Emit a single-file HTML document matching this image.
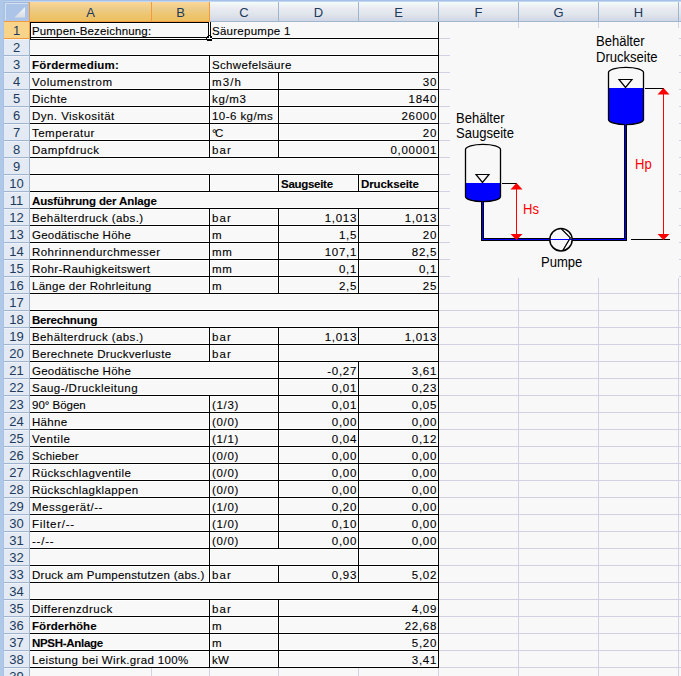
<!DOCTYPE html>
<html><head><meta charset="utf-8"><style>
html,body{margin:0;padding:0}
body{width:681px;height:676px;position:relative;overflow:hidden;background:#f8f8f8;font-family:"Liberation Sans",sans-serif}
div{position:absolute}
.t,.tb{font-size:11.5px;line-height:16px;color:#000;-webkit-text-stroke:0.1px #000;white-space:nowrap;height:16px}
.tb{font-weight:bold}
.num{letter-spacing:0.7px}
.ch{top:3px;height:19px;line-height:19px;text-align:center;font-size:13px;color:#203a5c}
.rh{left:4px;width:25px;height:16px;line-height:17px;text-align:center;font-size:13px;color:#203a5c}
.dg{font-size:13px;color:#000;white-space:nowrap;line-height:15px}
</style></head><body>
<div style="left:518px;top:278px;width:1px;height:398px;background:#d2d0e3;"></div>
<div style="left:518px;top:22px;width:1px;height:6px;background:#d2d0e3;"></div>
<div style="left:598px;top:278px;width:1px;height:398px;background:#d2d0e3;"></div>
<div style="left:598px;top:22px;width:1px;height:6px;background:#d2d0e3;"></div>
<div style="left:678px;top:278px;width:1px;height:398px;background:#d2d0e3;"></div>
<div style="left:678px;top:22px;width:1px;height:6px;background:#d2d0e3;"></div>
<div style="left:151px;top:668px;width:1px;height:8px;background:#d2d0e3;"></div>
<div style="left:209px;top:668px;width:1px;height:8px;background:#d2d0e3;"></div>
<div style="left:278px;top:668px;width:1px;height:8px;background:#d2d0e3;"></div>
<div style="left:358px;top:668px;width:1px;height:8px;background:#d2d0e3;"></div>
<div style="left:438px;top:668px;width:1px;height:8px;background:#d2d0e3;"></div>
<div style="left:439px;top:38px;width:11px;height:1px;background:#d2d0e3;"></div>
<div style="left:679px;top:38px;width:2px;height:1px;background:#d2d0e3;"></div>
<div style="left:439px;top:55px;width:11px;height:1px;background:#d2d0e3;"></div>
<div style="left:679px;top:55px;width:2px;height:1px;background:#d2d0e3;"></div>
<div style="left:439px;top:72px;width:11px;height:1px;background:#d2d0e3;"></div>
<div style="left:679px;top:72px;width:2px;height:1px;background:#d2d0e3;"></div>
<div style="left:439px;top:89px;width:11px;height:1px;background:#d2d0e3;"></div>
<div style="left:679px;top:89px;width:2px;height:1px;background:#d2d0e3;"></div>
<div style="left:439px;top:106px;width:11px;height:1px;background:#d2d0e3;"></div>
<div style="left:679px;top:106px;width:2px;height:1px;background:#d2d0e3;"></div>
<div style="left:439px;top:123px;width:11px;height:1px;background:#d2d0e3;"></div>
<div style="left:679px;top:123px;width:2px;height:1px;background:#d2d0e3;"></div>
<div style="left:439px;top:140px;width:11px;height:1px;background:#d2d0e3;"></div>
<div style="left:679px;top:140px;width:2px;height:1px;background:#d2d0e3;"></div>
<div style="left:439px;top:157px;width:11px;height:1px;background:#d2d0e3;"></div>
<div style="left:679px;top:157px;width:2px;height:1px;background:#d2d0e3;"></div>
<div style="left:439px;top:174px;width:11px;height:1px;background:#d2d0e3;"></div>
<div style="left:679px;top:174px;width:2px;height:1px;background:#d2d0e3;"></div>
<div style="left:439px;top:191px;width:11px;height:1px;background:#d2d0e3;"></div>
<div style="left:679px;top:191px;width:2px;height:1px;background:#d2d0e3;"></div>
<div style="left:439px;top:208px;width:11px;height:1px;background:#d2d0e3;"></div>
<div style="left:679px;top:208px;width:2px;height:1px;background:#d2d0e3;"></div>
<div style="left:439px;top:225px;width:11px;height:1px;background:#d2d0e3;"></div>
<div style="left:679px;top:225px;width:2px;height:1px;background:#d2d0e3;"></div>
<div style="left:439px;top:242px;width:11px;height:1px;background:#d2d0e3;"></div>
<div style="left:679px;top:242px;width:2px;height:1px;background:#d2d0e3;"></div>
<div style="left:439px;top:259px;width:11px;height:1px;background:#d2d0e3;"></div>
<div style="left:679px;top:259px;width:2px;height:1px;background:#d2d0e3;"></div>
<div style="left:439px;top:276px;width:11px;height:1px;background:#d2d0e3;"></div>
<div style="left:679px;top:276px;width:2px;height:1px;background:#d2d0e3;"></div>
<div style="left:439px;top:293px;width:242px;height:1px;background:#d2d0e3;"></div>
<div style="left:439px;top:310px;width:242px;height:1px;background:#d2d0e3;"></div>
<div style="left:439px;top:327px;width:242px;height:1px;background:#d2d0e3;"></div>
<div style="left:439px;top:344px;width:242px;height:1px;background:#d2d0e3;"></div>
<div style="left:439px;top:361px;width:242px;height:1px;background:#d2d0e3;"></div>
<div style="left:439px;top:378px;width:242px;height:1px;background:#d2d0e3;"></div>
<div style="left:439px;top:395px;width:242px;height:1px;background:#d2d0e3;"></div>
<div style="left:439px;top:412px;width:242px;height:1px;background:#d2d0e3;"></div>
<div style="left:439px;top:429px;width:242px;height:1px;background:#d2d0e3;"></div>
<div style="left:439px;top:446px;width:242px;height:1px;background:#d2d0e3;"></div>
<div style="left:439px;top:463px;width:242px;height:1px;background:#d2d0e3;"></div>
<div style="left:439px;top:480px;width:242px;height:1px;background:#d2d0e3;"></div>
<div style="left:439px;top:497px;width:242px;height:1px;background:#d2d0e3;"></div>
<div style="left:439px;top:514px;width:242px;height:1px;background:#d2d0e3;"></div>
<div style="left:439px;top:531px;width:242px;height:1px;background:#d2d0e3;"></div>
<div style="left:439px;top:548px;width:242px;height:1px;background:#d2d0e3;"></div>
<div style="left:439px;top:565px;width:242px;height:1px;background:#d2d0e3;"></div>
<div style="left:439px;top:582px;width:242px;height:1px;background:#d2d0e3;"></div>
<div style="left:439px;top:599px;width:242px;height:1px;background:#d2d0e3;"></div>
<div style="left:439px;top:616px;width:242px;height:1px;background:#d2d0e3;"></div>
<div style="left:439px;top:633px;width:242px;height:1px;background:#d2d0e3;"></div>
<div style="left:439px;top:650px;width:242px;height:1px;background:#d2d0e3;"></div>
<div style="left:439px;top:667px;width:242px;height:1px;background:#d2d0e3;"></div>
<div style="left:439px;top:684px;width:242px;height:1px;background:#d2d0e3;"></div>
<div style="left:30px;top:684px;width:409px;height:1px;background:#d2d0e3;"></div>
<div style="left:30px;top:37px;width:408px;height:1px;background:#ffffff;"></div>
<div style="left:30px;top:39px;width:408px;height:1px;background:#ffffff;"></div>
<div style="left:30px;top:54px;width:408px;height:1px;background:#ffffff;"></div>
<div style="left:30px;top:56px;width:408px;height:1px;background:#ffffff;"></div>
<div style="left:30px;top:71px;width:408px;height:1px;background:#ffffff;"></div>
<div style="left:30px;top:73px;width:408px;height:1px;background:#ffffff;"></div>
<div style="left:30px;top:88px;width:408px;height:1px;background:#ffffff;"></div>
<div style="left:30px;top:90px;width:408px;height:1px;background:#ffffff;"></div>
<div style="left:30px;top:105px;width:408px;height:1px;background:#ffffff;"></div>
<div style="left:30px;top:107px;width:408px;height:1px;background:#ffffff;"></div>
<div style="left:30px;top:122px;width:408px;height:1px;background:#ffffff;"></div>
<div style="left:30px;top:124px;width:408px;height:1px;background:#ffffff;"></div>
<div style="left:30px;top:139px;width:408px;height:1px;background:#ffffff;"></div>
<div style="left:30px;top:141px;width:408px;height:1px;background:#ffffff;"></div>
<div style="left:30px;top:156px;width:408px;height:1px;background:#ffffff;"></div>
<div style="left:30px;top:158px;width:408px;height:1px;background:#ffffff;"></div>
<div style="left:30px;top:173px;width:408px;height:1px;background:#ffffff;"></div>
<div style="left:30px;top:175px;width:408px;height:1px;background:#ffffff;"></div>
<div style="left:30px;top:190px;width:408px;height:1px;background:#ffffff;"></div>
<div style="left:30px;top:192px;width:408px;height:1px;background:#ffffff;"></div>
<div style="left:30px;top:207px;width:408px;height:1px;background:#ffffff;"></div>
<div style="left:30px;top:209px;width:408px;height:1px;background:#ffffff;"></div>
<div style="left:30px;top:224px;width:408px;height:1px;background:#ffffff;"></div>
<div style="left:30px;top:226px;width:408px;height:1px;background:#ffffff;"></div>
<div style="left:30px;top:241px;width:408px;height:1px;background:#ffffff;"></div>
<div style="left:30px;top:243px;width:408px;height:1px;background:#ffffff;"></div>
<div style="left:30px;top:258px;width:408px;height:1px;background:#ffffff;"></div>
<div style="left:30px;top:260px;width:408px;height:1px;background:#ffffff;"></div>
<div style="left:30px;top:275px;width:408px;height:1px;background:#ffffff;"></div>
<div style="left:30px;top:277px;width:408px;height:1px;background:#ffffff;"></div>
<div style="left:30px;top:292px;width:408px;height:1px;background:#ffffff;"></div>
<div style="left:30px;top:294px;width:408px;height:1px;background:#ffffff;"></div>
<div style="left:30px;top:309px;width:408px;height:1px;background:#ffffff;"></div>
<div style="left:30px;top:311px;width:408px;height:1px;background:#ffffff;"></div>
<div style="left:30px;top:326px;width:408px;height:1px;background:#ffffff;"></div>
<div style="left:30px;top:328px;width:408px;height:1px;background:#ffffff;"></div>
<div style="left:30px;top:343px;width:408px;height:1px;background:#ffffff;"></div>
<div style="left:30px;top:345px;width:408px;height:1px;background:#ffffff;"></div>
<div style="left:30px;top:360px;width:408px;height:1px;background:#ffffff;"></div>
<div style="left:30px;top:362px;width:408px;height:1px;background:#ffffff;"></div>
<div style="left:30px;top:377px;width:408px;height:1px;background:#ffffff;"></div>
<div style="left:30px;top:379px;width:408px;height:1px;background:#ffffff;"></div>
<div style="left:30px;top:394px;width:408px;height:1px;background:#ffffff;"></div>
<div style="left:30px;top:396px;width:408px;height:1px;background:#ffffff;"></div>
<div style="left:30px;top:411px;width:408px;height:1px;background:#ffffff;"></div>
<div style="left:30px;top:413px;width:408px;height:1px;background:#ffffff;"></div>
<div style="left:30px;top:428px;width:408px;height:1px;background:#ffffff;"></div>
<div style="left:30px;top:430px;width:408px;height:1px;background:#ffffff;"></div>
<div style="left:30px;top:445px;width:408px;height:1px;background:#ffffff;"></div>
<div style="left:30px;top:447px;width:408px;height:1px;background:#ffffff;"></div>
<div style="left:30px;top:462px;width:408px;height:1px;background:#ffffff;"></div>
<div style="left:30px;top:464px;width:408px;height:1px;background:#ffffff;"></div>
<div style="left:30px;top:479px;width:408px;height:1px;background:#ffffff;"></div>
<div style="left:30px;top:481px;width:408px;height:1px;background:#ffffff;"></div>
<div style="left:30px;top:496px;width:408px;height:1px;background:#ffffff;"></div>
<div style="left:30px;top:498px;width:408px;height:1px;background:#ffffff;"></div>
<div style="left:30px;top:513px;width:408px;height:1px;background:#ffffff;"></div>
<div style="left:30px;top:515px;width:408px;height:1px;background:#ffffff;"></div>
<div style="left:30px;top:530px;width:408px;height:1px;background:#ffffff;"></div>
<div style="left:30px;top:532px;width:408px;height:1px;background:#ffffff;"></div>
<div style="left:30px;top:547px;width:408px;height:1px;background:#ffffff;"></div>
<div style="left:30px;top:549px;width:408px;height:1px;background:#ffffff;"></div>
<div style="left:30px;top:564px;width:408px;height:1px;background:#ffffff;"></div>
<div style="left:30px;top:566px;width:408px;height:1px;background:#ffffff;"></div>
<div style="left:30px;top:581px;width:408px;height:1px;background:#ffffff;"></div>
<div style="left:30px;top:583px;width:408px;height:1px;background:#ffffff;"></div>
<div style="left:30px;top:598px;width:408px;height:1px;background:#ffffff;"></div>
<div style="left:30px;top:600px;width:408px;height:1px;background:#ffffff;"></div>
<div style="left:30px;top:615px;width:408px;height:1px;background:#ffffff;"></div>
<div style="left:30px;top:617px;width:408px;height:1px;background:#ffffff;"></div>
<div style="left:30px;top:632px;width:408px;height:1px;background:#ffffff;"></div>
<div style="left:30px;top:634px;width:408px;height:1px;background:#ffffff;"></div>
<div style="left:30px;top:649px;width:408px;height:1px;background:#ffffff;"></div>
<div style="left:30px;top:651px;width:408px;height:1px;background:#ffffff;"></div>
<div style="left:30px;top:666px;width:408px;height:1px;background:#ffffff;"></div>
<div style="left:208px;top:22px;width:1px;height:16px;background:#ffffff;"></div>
<div style="left:210px;top:22px;width:1px;height:16px;background:#ffffff;"></div>
<div style="left:437px;top:22px;width:1px;height:16px;background:#ffffff;"></div>
<div style="left:437px;top:39px;width:1px;height:16px;background:#ffffff;"></div>
<div style="left:208px;top:56px;width:1px;height:16px;background:#ffffff;"></div>
<div style="left:210px;top:56px;width:1px;height:16px;background:#ffffff;"></div>
<div style="left:437px;top:56px;width:1px;height:16px;background:#ffffff;"></div>
<div style="left:208px;top:73px;width:1px;height:16px;background:#ffffff;"></div>
<div style="left:210px;top:73px;width:1px;height:16px;background:#ffffff;"></div>
<div style="left:277px;top:73px;width:1px;height:16px;background:#ffffff;"></div>
<div style="left:279px;top:73px;width:1px;height:16px;background:#ffffff;"></div>
<div style="left:437px;top:73px;width:1px;height:16px;background:#ffffff;"></div>
<div style="left:208px;top:90px;width:1px;height:16px;background:#ffffff;"></div>
<div style="left:210px;top:90px;width:1px;height:16px;background:#ffffff;"></div>
<div style="left:277px;top:90px;width:1px;height:16px;background:#ffffff;"></div>
<div style="left:279px;top:90px;width:1px;height:16px;background:#ffffff;"></div>
<div style="left:437px;top:90px;width:1px;height:16px;background:#ffffff;"></div>
<div style="left:208px;top:107px;width:1px;height:16px;background:#ffffff;"></div>
<div style="left:210px;top:107px;width:1px;height:16px;background:#ffffff;"></div>
<div style="left:277px;top:107px;width:1px;height:16px;background:#ffffff;"></div>
<div style="left:279px;top:107px;width:1px;height:16px;background:#ffffff;"></div>
<div style="left:437px;top:107px;width:1px;height:16px;background:#ffffff;"></div>
<div style="left:208px;top:124px;width:1px;height:16px;background:#ffffff;"></div>
<div style="left:210px;top:124px;width:1px;height:16px;background:#ffffff;"></div>
<div style="left:277px;top:124px;width:1px;height:16px;background:#ffffff;"></div>
<div style="left:279px;top:124px;width:1px;height:16px;background:#ffffff;"></div>
<div style="left:437px;top:124px;width:1px;height:16px;background:#ffffff;"></div>
<div style="left:208px;top:141px;width:1px;height:16px;background:#ffffff;"></div>
<div style="left:210px;top:141px;width:1px;height:16px;background:#ffffff;"></div>
<div style="left:277px;top:141px;width:1px;height:16px;background:#ffffff;"></div>
<div style="left:279px;top:141px;width:1px;height:16px;background:#ffffff;"></div>
<div style="left:437px;top:141px;width:1px;height:16px;background:#ffffff;"></div>
<div style="left:437px;top:158px;width:1px;height:16px;background:#ffffff;"></div>
<div style="left:208px;top:175px;width:1px;height:16px;background:#ffffff;"></div>
<div style="left:210px;top:175px;width:1px;height:16px;background:#ffffff;"></div>
<div style="left:277px;top:175px;width:1px;height:16px;background:#ffffff;"></div>
<div style="left:279px;top:175px;width:1px;height:16px;background:#ffffff;"></div>
<div style="left:357px;top:175px;width:1px;height:16px;background:#ffffff;"></div>
<div style="left:359px;top:175px;width:1px;height:16px;background:#ffffff;"></div>
<div style="left:437px;top:175px;width:1px;height:16px;background:#ffffff;"></div>
<div style="left:437px;top:192px;width:1px;height:16px;background:#ffffff;"></div>
<div style="left:208px;top:209px;width:1px;height:16px;background:#ffffff;"></div>
<div style="left:210px;top:209px;width:1px;height:16px;background:#ffffff;"></div>
<div style="left:277px;top:209px;width:1px;height:16px;background:#ffffff;"></div>
<div style="left:279px;top:209px;width:1px;height:16px;background:#ffffff;"></div>
<div style="left:357px;top:209px;width:1px;height:16px;background:#ffffff;"></div>
<div style="left:359px;top:209px;width:1px;height:16px;background:#ffffff;"></div>
<div style="left:437px;top:209px;width:1px;height:16px;background:#ffffff;"></div>
<div style="left:208px;top:226px;width:1px;height:16px;background:#ffffff;"></div>
<div style="left:210px;top:226px;width:1px;height:16px;background:#ffffff;"></div>
<div style="left:277px;top:226px;width:1px;height:16px;background:#ffffff;"></div>
<div style="left:279px;top:226px;width:1px;height:16px;background:#ffffff;"></div>
<div style="left:357px;top:226px;width:1px;height:16px;background:#ffffff;"></div>
<div style="left:359px;top:226px;width:1px;height:16px;background:#ffffff;"></div>
<div style="left:437px;top:226px;width:1px;height:16px;background:#ffffff;"></div>
<div style="left:208px;top:243px;width:1px;height:16px;background:#ffffff;"></div>
<div style="left:210px;top:243px;width:1px;height:16px;background:#ffffff;"></div>
<div style="left:277px;top:243px;width:1px;height:16px;background:#ffffff;"></div>
<div style="left:279px;top:243px;width:1px;height:16px;background:#ffffff;"></div>
<div style="left:357px;top:243px;width:1px;height:16px;background:#ffffff;"></div>
<div style="left:359px;top:243px;width:1px;height:16px;background:#ffffff;"></div>
<div style="left:437px;top:243px;width:1px;height:16px;background:#ffffff;"></div>
<div style="left:208px;top:260px;width:1px;height:16px;background:#ffffff;"></div>
<div style="left:210px;top:260px;width:1px;height:16px;background:#ffffff;"></div>
<div style="left:277px;top:260px;width:1px;height:16px;background:#ffffff;"></div>
<div style="left:279px;top:260px;width:1px;height:16px;background:#ffffff;"></div>
<div style="left:357px;top:260px;width:1px;height:16px;background:#ffffff;"></div>
<div style="left:359px;top:260px;width:1px;height:16px;background:#ffffff;"></div>
<div style="left:437px;top:260px;width:1px;height:16px;background:#ffffff;"></div>
<div style="left:208px;top:277px;width:1px;height:16px;background:#ffffff;"></div>
<div style="left:210px;top:277px;width:1px;height:16px;background:#ffffff;"></div>
<div style="left:277px;top:277px;width:1px;height:16px;background:#ffffff;"></div>
<div style="left:279px;top:277px;width:1px;height:16px;background:#ffffff;"></div>
<div style="left:357px;top:277px;width:1px;height:16px;background:#ffffff;"></div>
<div style="left:359px;top:277px;width:1px;height:16px;background:#ffffff;"></div>
<div style="left:437px;top:277px;width:1px;height:16px;background:#ffffff;"></div>
<div style="left:437px;top:294px;width:1px;height:16px;background:#ffffff;"></div>
<div style="left:437px;top:311px;width:1px;height:16px;background:#ffffff;"></div>
<div style="left:208px;top:328px;width:1px;height:16px;background:#ffffff;"></div>
<div style="left:210px;top:328px;width:1px;height:16px;background:#ffffff;"></div>
<div style="left:277px;top:328px;width:1px;height:16px;background:#ffffff;"></div>
<div style="left:279px;top:328px;width:1px;height:16px;background:#ffffff;"></div>
<div style="left:357px;top:328px;width:1px;height:16px;background:#ffffff;"></div>
<div style="left:359px;top:328px;width:1px;height:16px;background:#ffffff;"></div>
<div style="left:437px;top:328px;width:1px;height:16px;background:#ffffff;"></div>
<div style="left:208px;top:345px;width:1px;height:16px;background:#ffffff;"></div>
<div style="left:210px;top:345px;width:1px;height:16px;background:#ffffff;"></div>
<div style="left:277px;top:345px;width:1px;height:16px;background:#ffffff;"></div>
<div style="left:279px;top:345px;width:1px;height:16px;background:#ffffff;"></div>
<div style="left:437px;top:345px;width:1px;height:16px;background:#ffffff;"></div>
<div style="left:277px;top:362px;width:1px;height:16px;background:#ffffff;"></div>
<div style="left:279px;top:362px;width:1px;height:16px;background:#ffffff;"></div>
<div style="left:357px;top:362px;width:1px;height:16px;background:#ffffff;"></div>
<div style="left:359px;top:362px;width:1px;height:16px;background:#ffffff;"></div>
<div style="left:437px;top:362px;width:1px;height:16px;background:#ffffff;"></div>
<div style="left:277px;top:379px;width:1px;height:16px;background:#ffffff;"></div>
<div style="left:279px;top:379px;width:1px;height:16px;background:#ffffff;"></div>
<div style="left:357px;top:379px;width:1px;height:16px;background:#ffffff;"></div>
<div style="left:359px;top:379px;width:1px;height:16px;background:#ffffff;"></div>
<div style="left:437px;top:379px;width:1px;height:16px;background:#ffffff;"></div>
<div style="left:208px;top:396px;width:1px;height:16px;background:#ffffff;"></div>
<div style="left:210px;top:396px;width:1px;height:16px;background:#ffffff;"></div>
<div style="left:277px;top:396px;width:1px;height:16px;background:#ffffff;"></div>
<div style="left:279px;top:396px;width:1px;height:16px;background:#ffffff;"></div>
<div style="left:357px;top:396px;width:1px;height:16px;background:#ffffff;"></div>
<div style="left:359px;top:396px;width:1px;height:16px;background:#ffffff;"></div>
<div style="left:437px;top:396px;width:1px;height:16px;background:#ffffff;"></div>
<div style="left:208px;top:413px;width:1px;height:16px;background:#ffffff;"></div>
<div style="left:210px;top:413px;width:1px;height:16px;background:#ffffff;"></div>
<div style="left:277px;top:413px;width:1px;height:16px;background:#ffffff;"></div>
<div style="left:279px;top:413px;width:1px;height:16px;background:#ffffff;"></div>
<div style="left:357px;top:413px;width:1px;height:16px;background:#ffffff;"></div>
<div style="left:359px;top:413px;width:1px;height:16px;background:#ffffff;"></div>
<div style="left:437px;top:413px;width:1px;height:16px;background:#ffffff;"></div>
<div style="left:208px;top:430px;width:1px;height:16px;background:#ffffff;"></div>
<div style="left:210px;top:430px;width:1px;height:16px;background:#ffffff;"></div>
<div style="left:277px;top:430px;width:1px;height:16px;background:#ffffff;"></div>
<div style="left:279px;top:430px;width:1px;height:16px;background:#ffffff;"></div>
<div style="left:357px;top:430px;width:1px;height:16px;background:#ffffff;"></div>
<div style="left:359px;top:430px;width:1px;height:16px;background:#ffffff;"></div>
<div style="left:437px;top:430px;width:1px;height:16px;background:#ffffff;"></div>
<div style="left:208px;top:447px;width:1px;height:16px;background:#ffffff;"></div>
<div style="left:210px;top:447px;width:1px;height:16px;background:#ffffff;"></div>
<div style="left:277px;top:447px;width:1px;height:16px;background:#ffffff;"></div>
<div style="left:279px;top:447px;width:1px;height:16px;background:#ffffff;"></div>
<div style="left:357px;top:447px;width:1px;height:16px;background:#ffffff;"></div>
<div style="left:359px;top:447px;width:1px;height:16px;background:#ffffff;"></div>
<div style="left:437px;top:447px;width:1px;height:16px;background:#ffffff;"></div>
<div style="left:208px;top:464px;width:1px;height:16px;background:#ffffff;"></div>
<div style="left:210px;top:464px;width:1px;height:16px;background:#ffffff;"></div>
<div style="left:277px;top:464px;width:1px;height:16px;background:#ffffff;"></div>
<div style="left:279px;top:464px;width:1px;height:16px;background:#ffffff;"></div>
<div style="left:357px;top:464px;width:1px;height:16px;background:#ffffff;"></div>
<div style="left:359px;top:464px;width:1px;height:16px;background:#ffffff;"></div>
<div style="left:437px;top:464px;width:1px;height:16px;background:#ffffff;"></div>
<div style="left:208px;top:481px;width:1px;height:16px;background:#ffffff;"></div>
<div style="left:210px;top:481px;width:1px;height:16px;background:#ffffff;"></div>
<div style="left:277px;top:481px;width:1px;height:16px;background:#ffffff;"></div>
<div style="left:279px;top:481px;width:1px;height:16px;background:#ffffff;"></div>
<div style="left:357px;top:481px;width:1px;height:16px;background:#ffffff;"></div>
<div style="left:359px;top:481px;width:1px;height:16px;background:#ffffff;"></div>
<div style="left:437px;top:481px;width:1px;height:16px;background:#ffffff;"></div>
<div style="left:208px;top:498px;width:1px;height:16px;background:#ffffff;"></div>
<div style="left:210px;top:498px;width:1px;height:16px;background:#ffffff;"></div>
<div style="left:277px;top:498px;width:1px;height:16px;background:#ffffff;"></div>
<div style="left:279px;top:498px;width:1px;height:16px;background:#ffffff;"></div>
<div style="left:357px;top:498px;width:1px;height:16px;background:#ffffff;"></div>
<div style="left:359px;top:498px;width:1px;height:16px;background:#ffffff;"></div>
<div style="left:437px;top:498px;width:1px;height:16px;background:#ffffff;"></div>
<div style="left:208px;top:515px;width:1px;height:16px;background:#ffffff;"></div>
<div style="left:210px;top:515px;width:1px;height:16px;background:#ffffff;"></div>
<div style="left:277px;top:515px;width:1px;height:16px;background:#ffffff;"></div>
<div style="left:279px;top:515px;width:1px;height:16px;background:#ffffff;"></div>
<div style="left:357px;top:515px;width:1px;height:16px;background:#ffffff;"></div>
<div style="left:359px;top:515px;width:1px;height:16px;background:#ffffff;"></div>
<div style="left:437px;top:515px;width:1px;height:16px;background:#ffffff;"></div>
<div style="left:208px;top:532px;width:1px;height:16px;background:#ffffff;"></div>
<div style="left:210px;top:532px;width:1px;height:16px;background:#ffffff;"></div>
<div style="left:277px;top:532px;width:1px;height:16px;background:#ffffff;"></div>
<div style="left:279px;top:532px;width:1px;height:16px;background:#ffffff;"></div>
<div style="left:357px;top:532px;width:1px;height:16px;background:#ffffff;"></div>
<div style="left:359px;top:532px;width:1px;height:16px;background:#ffffff;"></div>
<div style="left:437px;top:532px;width:1px;height:16px;background:#ffffff;"></div>
<div style="left:208px;top:549px;width:1px;height:16px;background:#ffffff;"></div>
<div style="left:210px;top:549px;width:1px;height:16px;background:#ffffff;"></div>
<div style="left:357px;top:549px;width:1px;height:16px;background:#ffffff;"></div>
<div style="left:359px;top:549px;width:1px;height:16px;background:#ffffff;"></div>
<div style="left:437px;top:549px;width:1px;height:16px;background:#ffffff;"></div>
<div style="left:208px;top:566px;width:1px;height:16px;background:#ffffff;"></div>
<div style="left:210px;top:566px;width:1px;height:16px;background:#ffffff;"></div>
<div style="left:277px;top:566px;width:1px;height:16px;background:#ffffff;"></div>
<div style="left:279px;top:566px;width:1px;height:16px;background:#ffffff;"></div>
<div style="left:357px;top:566px;width:1px;height:16px;background:#ffffff;"></div>
<div style="left:359px;top:566px;width:1px;height:16px;background:#ffffff;"></div>
<div style="left:437px;top:566px;width:1px;height:16px;background:#ffffff;"></div>
<div style="left:437px;top:583px;width:1px;height:16px;background:#ffffff;"></div>
<div style="left:208px;top:600px;width:1px;height:16px;background:#ffffff;"></div>
<div style="left:210px;top:600px;width:1px;height:16px;background:#ffffff;"></div>
<div style="left:277px;top:600px;width:1px;height:16px;background:#ffffff;"></div>
<div style="left:279px;top:600px;width:1px;height:16px;background:#ffffff;"></div>
<div style="left:437px;top:600px;width:1px;height:16px;background:#ffffff;"></div>
<div style="left:208px;top:617px;width:1px;height:16px;background:#ffffff;"></div>
<div style="left:210px;top:617px;width:1px;height:16px;background:#ffffff;"></div>
<div style="left:277px;top:617px;width:1px;height:16px;background:#ffffff;"></div>
<div style="left:279px;top:617px;width:1px;height:16px;background:#ffffff;"></div>
<div style="left:437px;top:617px;width:1px;height:16px;background:#ffffff;"></div>
<div style="left:208px;top:634px;width:1px;height:16px;background:#ffffff;"></div>
<div style="left:210px;top:634px;width:1px;height:16px;background:#ffffff;"></div>
<div style="left:277px;top:634px;width:1px;height:16px;background:#ffffff;"></div>
<div style="left:279px;top:634px;width:1px;height:16px;background:#ffffff;"></div>
<div style="left:437px;top:634px;width:1px;height:16px;background:#ffffff;"></div>
<div style="left:208px;top:651px;width:1px;height:16px;background:#ffffff;"></div>
<div style="left:210px;top:651px;width:1px;height:16px;background:#ffffff;"></div>
<div style="left:277px;top:651px;width:1px;height:16px;background:#ffffff;"></div>
<div style="left:279px;top:651px;width:1px;height:16px;background:#ffffff;"></div>
<div style="left:437px;top:651px;width:1px;height:16px;background:#ffffff;"></div>
<div style="left:30px;top:38px;width:409px;height:1px;background:#000;"></div>
<div style="left:30px;top:55px;width:409px;height:1px;background:#000;"></div>
<div style="left:30px;top:72px;width:409px;height:1px;background:#000;"></div>
<div style="left:30px;top:89px;width:409px;height:1px;background:#000;"></div>
<div style="left:30px;top:106px;width:409px;height:1px;background:#000;"></div>
<div style="left:30px;top:123px;width:409px;height:1px;background:#000;"></div>
<div style="left:30px;top:140px;width:409px;height:1px;background:#000;"></div>
<div style="left:30px;top:157px;width:409px;height:1px;background:#000;"></div>
<div style="left:30px;top:174px;width:409px;height:1px;background:#000;"></div>
<div style="left:30px;top:191px;width:409px;height:1px;background:#000;"></div>
<div style="left:30px;top:208px;width:409px;height:1px;background:#000;"></div>
<div style="left:30px;top:225px;width:409px;height:1px;background:#000;"></div>
<div style="left:30px;top:242px;width:409px;height:1px;background:#000;"></div>
<div style="left:30px;top:259px;width:409px;height:1px;background:#000;"></div>
<div style="left:30px;top:276px;width:409px;height:1px;background:#000;"></div>
<div style="left:30px;top:293px;width:409px;height:1px;background:#000;"></div>
<div style="left:30px;top:310px;width:409px;height:1px;background:#000;"></div>
<div style="left:30px;top:327px;width:409px;height:1px;background:#000;"></div>
<div style="left:30px;top:344px;width:409px;height:1px;background:#000;"></div>
<div style="left:30px;top:361px;width:409px;height:1px;background:#000;"></div>
<div style="left:30px;top:378px;width:409px;height:1px;background:#000;"></div>
<div style="left:30px;top:395px;width:409px;height:1px;background:#000;"></div>
<div style="left:30px;top:412px;width:409px;height:1px;background:#000;"></div>
<div style="left:30px;top:429px;width:409px;height:1px;background:#000;"></div>
<div style="left:30px;top:446px;width:409px;height:1px;background:#000;"></div>
<div style="left:30px;top:463px;width:409px;height:1px;background:#000;"></div>
<div style="left:30px;top:480px;width:409px;height:1px;background:#000;"></div>
<div style="left:30px;top:497px;width:409px;height:1px;background:#000;"></div>
<div style="left:30px;top:514px;width:409px;height:1px;background:#000;"></div>
<div style="left:30px;top:531px;width:409px;height:1px;background:#000;"></div>
<div style="left:30px;top:548px;width:409px;height:1px;background:#000;"></div>
<div style="left:30px;top:565px;width:409px;height:1px;background:#000;"></div>
<div style="left:30px;top:582px;width:409px;height:1px;background:#000;"></div>
<div style="left:30px;top:599px;width:409px;height:1px;background:#000;"></div>
<div style="left:30px;top:616px;width:409px;height:1px;background:#000;"></div>
<div style="left:30px;top:633px;width:409px;height:1px;background:#000;"></div>
<div style="left:30px;top:650px;width:409px;height:1px;background:#000;"></div>
<div style="left:30px;top:667px;width:409px;height:1px;background:#000;"></div>
<div style="left:209px;top:22px;width:1px;height:16px;background:#000;"></div>
<div style="left:438px;top:22px;width:1px;height:16px;background:#000;"></div>
<div style="left:438px;top:39px;width:1px;height:16px;background:#000;"></div>
<div style="left:209px;top:56px;width:1px;height:16px;background:#000;"></div>
<div style="left:438px;top:56px;width:1px;height:16px;background:#000;"></div>
<div style="left:209px;top:73px;width:1px;height:16px;background:#000;"></div>
<div style="left:278px;top:73px;width:1px;height:16px;background:#000;"></div>
<div style="left:438px;top:73px;width:1px;height:16px;background:#000;"></div>
<div style="left:209px;top:90px;width:1px;height:16px;background:#000;"></div>
<div style="left:278px;top:90px;width:1px;height:16px;background:#000;"></div>
<div style="left:438px;top:90px;width:1px;height:16px;background:#000;"></div>
<div style="left:209px;top:107px;width:1px;height:16px;background:#000;"></div>
<div style="left:278px;top:107px;width:1px;height:16px;background:#000;"></div>
<div style="left:438px;top:107px;width:1px;height:16px;background:#000;"></div>
<div style="left:209px;top:124px;width:1px;height:16px;background:#000;"></div>
<div style="left:278px;top:124px;width:1px;height:16px;background:#000;"></div>
<div style="left:438px;top:124px;width:1px;height:16px;background:#000;"></div>
<div style="left:209px;top:141px;width:1px;height:16px;background:#000;"></div>
<div style="left:278px;top:141px;width:1px;height:16px;background:#000;"></div>
<div style="left:438px;top:141px;width:1px;height:16px;background:#000;"></div>
<div style="left:438px;top:158px;width:1px;height:16px;background:#000;"></div>
<div style="left:209px;top:175px;width:1px;height:16px;background:#000;"></div>
<div style="left:278px;top:175px;width:1px;height:16px;background:#000;"></div>
<div style="left:358px;top:175px;width:1px;height:16px;background:#000;"></div>
<div style="left:438px;top:175px;width:1px;height:16px;background:#000;"></div>
<div style="left:438px;top:192px;width:1px;height:16px;background:#000;"></div>
<div style="left:209px;top:209px;width:1px;height:16px;background:#000;"></div>
<div style="left:278px;top:209px;width:1px;height:16px;background:#000;"></div>
<div style="left:358px;top:209px;width:1px;height:16px;background:#000;"></div>
<div style="left:438px;top:209px;width:1px;height:16px;background:#000;"></div>
<div style="left:209px;top:226px;width:1px;height:16px;background:#000;"></div>
<div style="left:278px;top:226px;width:1px;height:16px;background:#000;"></div>
<div style="left:358px;top:226px;width:1px;height:16px;background:#000;"></div>
<div style="left:438px;top:226px;width:1px;height:16px;background:#000;"></div>
<div style="left:209px;top:243px;width:1px;height:16px;background:#000;"></div>
<div style="left:278px;top:243px;width:1px;height:16px;background:#000;"></div>
<div style="left:358px;top:243px;width:1px;height:16px;background:#000;"></div>
<div style="left:438px;top:243px;width:1px;height:16px;background:#000;"></div>
<div style="left:209px;top:260px;width:1px;height:16px;background:#000;"></div>
<div style="left:278px;top:260px;width:1px;height:16px;background:#000;"></div>
<div style="left:358px;top:260px;width:1px;height:16px;background:#000;"></div>
<div style="left:438px;top:260px;width:1px;height:16px;background:#000;"></div>
<div style="left:209px;top:277px;width:1px;height:16px;background:#000;"></div>
<div style="left:278px;top:277px;width:1px;height:16px;background:#000;"></div>
<div style="left:358px;top:277px;width:1px;height:16px;background:#000;"></div>
<div style="left:438px;top:277px;width:1px;height:16px;background:#000;"></div>
<div style="left:438px;top:294px;width:1px;height:16px;background:#000;"></div>
<div style="left:438px;top:311px;width:1px;height:16px;background:#000;"></div>
<div style="left:209px;top:328px;width:1px;height:16px;background:#000;"></div>
<div style="left:278px;top:328px;width:1px;height:16px;background:#000;"></div>
<div style="left:358px;top:328px;width:1px;height:16px;background:#000;"></div>
<div style="left:438px;top:328px;width:1px;height:16px;background:#000;"></div>
<div style="left:209px;top:345px;width:1px;height:16px;background:#000;"></div>
<div style="left:278px;top:345px;width:1px;height:16px;background:#000;"></div>
<div style="left:438px;top:345px;width:1px;height:16px;background:#000;"></div>
<div style="left:278px;top:362px;width:1px;height:16px;background:#000;"></div>
<div style="left:358px;top:362px;width:1px;height:16px;background:#000;"></div>
<div style="left:438px;top:362px;width:1px;height:16px;background:#000;"></div>
<div style="left:278px;top:379px;width:1px;height:16px;background:#000;"></div>
<div style="left:358px;top:379px;width:1px;height:16px;background:#000;"></div>
<div style="left:438px;top:379px;width:1px;height:16px;background:#000;"></div>
<div style="left:209px;top:396px;width:1px;height:16px;background:#000;"></div>
<div style="left:278px;top:396px;width:1px;height:16px;background:#000;"></div>
<div style="left:358px;top:396px;width:1px;height:16px;background:#000;"></div>
<div style="left:438px;top:396px;width:1px;height:16px;background:#000;"></div>
<div style="left:209px;top:413px;width:1px;height:16px;background:#000;"></div>
<div style="left:278px;top:413px;width:1px;height:16px;background:#000;"></div>
<div style="left:358px;top:413px;width:1px;height:16px;background:#000;"></div>
<div style="left:438px;top:413px;width:1px;height:16px;background:#000;"></div>
<div style="left:209px;top:430px;width:1px;height:16px;background:#000;"></div>
<div style="left:278px;top:430px;width:1px;height:16px;background:#000;"></div>
<div style="left:358px;top:430px;width:1px;height:16px;background:#000;"></div>
<div style="left:438px;top:430px;width:1px;height:16px;background:#000;"></div>
<div style="left:209px;top:447px;width:1px;height:16px;background:#000;"></div>
<div style="left:278px;top:447px;width:1px;height:16px;background:#000;"></div>
<div style="left:358px;top:447px;width:1px;height:16px;background:#000;"></div>
<div style="left:438px;top:447px;width:1px;height:16px;background:#000;"></div>
<div style="left:209px;top:464px;width:1px;height:16px;background:#000;"></div>
<div style="left:278px;top:464px;width:1px;height:16px;background:#000;"></div>
<div style="left:358px;top:464px;width:1px;height:16px;background:#000;"></div>
<div style="left:438px;top:464px;width:1px;height:16px;background:#000;"></div>
<div style="left:209px;top:481px;width:1px;height:16px;background:#000;"></div>
<div style="left:278px;top:481px;width:1px;height:16px;background:#000;"></div>
<div style="left:358px;top:481px;width:1px;height:16px;background:#000;"></div>
<div style="left:438px;top:481px;width:1px;height:16px;background:#000;"></div>
<div style="left:209px;top:498px;width:1px;height:16px;background:#000;"></div>
<div style="left:278px;top:498px;width:1px;height:16px;background:#000;"></div>
<div style="left:358px;top:498px;width:1px;height:16px;background:#000;"></div>
<div style="left:438px;top:498px;width:1px;height:16px;background:#000;"></div>
<div style="left:209px;top:515px;width:1px;height:16px;background:#000;"></div>
<div style="left:278px;top:515px;width:1px;height:16px;background:#000;"></div>
<div style="left:358px;top:515px;width:1px;height:16px;background:#000;"></div>
<div style="left:438px;top:515px;width:1px;height:16px;background:#000;"></div>
<div style="left:209px;top:532px;width:1px;height:16px;background:#000;"></div>
<div style="left:278px;top:532px;width:1px;height:16px;background:#000;"></div>
<div style="left:358px;top:532px;width:1px;height:16px;background:#000;"></div>
<div style="left:438px;top:532px;width:1px;height:16px;background:#000;"></div>
<div style="left:209px;top:549px;width:1px;height:16px;background:#000;"></div>
<div style="left:358px;top:549px;width:1px;height:16px;background:#000;"></div>
<div style="left:438px;top:549px;width:1px;height:16px;background:#000;"></div>
<div style="left:209px;top:566px;width:1px;height:16px;background:#000;"></div>
<div style="left:278px;top:566px;width:1px;height:16px;background:#000;"></div>
<div style="left:358px;top:566px;width:1px;height:16px;background:#000;"></div>
<div style="left:438px;top:566px;width:1px;height:16px;background:#000;"></div>
<div style="left:438px;top:583px;width:1px;height:16px;background:#000;"></div>
<div style="left:209px;top:600px;width:1px;height:16px;background:#000;"></div>
<div style="left:278px;top:600px;width:1px;height:16px;background:#000;"></div>
<div style="left:438px;top:600px;width:1px;height:16px;background:#000;"></div>
<div style="left:209px;top:617px;width:1px;height:16px;background:#000;"></div>
<div style="left:278px;top:617px;width:1px;height:16px;background:#000;"></div>
<div style="left:438px;top:617px;width:1px;height:16px;background:#000;"></div>
<div style="left:209px;top:634px;width:1px;height:16px;background:#000;"></div>
<div style="left:278px;top:634px;width:1px;height:16px;background:#000;"></div>
<div style="left:438px;top:634px;width:1px;height:16px;background:#000;"></div>
<div style="left:209px;top:651px;width:1px;height:16px;background:#000;"></div>
<div style="left:278px;top:651px;width:1px;height:16px;background:#000;"></div>
<div style="left:438px;top:651px;width:1px;height:16px;background:#000;"></div>
<div class="t" style="left:32px;top:23px;letter-spacing:0.153px">Pumpen-Bezeichnung:</div>
<div class="t" style="left:212px;top:23px;letter-spacing:0.266px">Säurepumpe 1</div>
<div class="tb" style="left:32px;top:57px;letter-spacing:0.206px">Fördermedium:</div>
<div class="t" style="left:212px;top:57px;letter-spacing:0.328px">Schwefelsäure</div>
<div class="t" style="left:32px;top:74px;letter-spacing:0.604px">Volumenstrom</div>
<div class="t" style="left:212px;top:74px;letter-spacing:1.088px">m3/h</div>
<div class="t num" style="right:244px;top:74px">30</div>
<div class="t" style="left:32px;top:91px;letter-spacing:0.483px">Dichte</div>
<div class="t" style="left:212px;top:91px;letter-spacing:0.629px">kg/m3</div>
<div class="t num" style="right:244px;top:91px">1840</div>
<div class="t" style="left:32px;top:108px;letter-spacing:0.461px">Dyn. Viskosität</div>
<div class="t" style="left:212px;top:108px;letter-spacing:0.435px">10-6 kg/ms</div>
<div class="t num" style="right:244px;top:108px">26000</div>
<div class="t" style="left:32px;top:125px;letter-spacing:0.476px">Temperatur</div>
<div class="t" style="left:212px;top:125px;letter-spacing:-1.537px">°C</div>
<div class="t num" style="right:244px;top:125px">20</div>
<div class="t" style="left:32px;top:142px;letter-spacing:0.568px">Dampfdruck</div>
<div class="t" style="left:212px;top:142px;letter-spacing:1.084px">bar</div>
<div class="t num" style="right:244px;top:142px">0,00001</div>
<div class="tb" style="left:281px;top:176px;letter-spacing:-0.286px">Saugseite</div>
<div class="tb" style="left:361px;top:176px;letter-spacing:-0.093px">Druckseite</div>
<div class="tb" style="left:32px;top:193px;letter-spacing:-0.128px">Ausführung der Anlage</div>
<div class="t" style="left:32px;top:210px;letter-spacing:0.395px">Behälterdruck (abs.)</div>
<div class="t" style="left:212px;top:210px;letter-spacing:1.084px">bar</div>
<div class="t num" style="right:324px;top:210px">1,013</div>
<div class="t num" style="right:244px;top:210px">1,013</div>
<div class="t" style="left:32px;top:227px;letter-spacing:0.236px">Geodätische Höhe</div>
<div class="t" style="left:212px;top:227px;letter-spacing:0.417px">m</div>
<div class="t num" style="right:324px;top:227px">1,5</div>
<div class="t num" style="right:244px;top:227px">20</div>
<div class="t" style="left:32px;top:244px;letter-spacing:0.445px">Rohrinnendurchmesser</div>
<div class="t" style="left:212px;top:244px;letter-spacing:0.733px">mm</div>
<div class="t num" style="right:324px;top:244px">107,1</div>
<div class="t num" style="right:244px;top:244px">82,5</div>
<div class="t" style="left:32px;top:261px;letter-spacing:0.390px">Rohr-Rauhigkeitswert</div>
<div class="t" style="left:212px;top:261px;letter-spacing:0.733px">mm</div>
<div class="t num" style="right:324px;top:261px">0,1</div>
<div class="t num" style="right:244px;top:261px">0,1</div>
<div class="t" style="left:32px;top:278px;letter-spacing:0.270px">Länge der Rohrleitung</div>
<div class="t" style="left:212px;top:278px;letter-spacing:0.417px">m</div>
<div class="t num" style="right:324px;top:278px">2,5</div>
<div class="t num" style="right:244px;top:278px">25</div>
<div class="tb" style="left:32px;top:312px;letter-spacing:-0.187px">Berechnung</div>
<div class="t" style="left:32px;top:329px;letter-spacing:0.395px">Behälterdruck (abs.)</div>
<div class="t" style="left:212px;top:329px;letter-spacing:1.084px">bar</div>
<div class="t num" style="right:324px;top:329px">1,013</div>
<div class="t num" style="right:244px;top:329px">1,013</div>
<div class="t" style="left:32px;top:346px;letter-spacing:0.293px">Berechnete Druckverluste</div>
<div class="t" style="left:212px;top:346px;letter-spacing:1.084px">bar</div>
<div class="t" style="left:32px;top:363px;letter-spacing:0.236px">Geodätische Höhe</div>
<div class="t num" style="right:324px;top:363px">-0,27</div>
<div class="t num" style="right:244px;top:363px">3,61</div>
<div class="t" style="left:32px;top:380px;letter-spacing:0.456px">Saug-/Druckleitung</div>
<div class="t num" style="right:324px;top:380px">0,01</div>
<div class="t num" style="right:244px;top:380px">0,23</div>
<div class="t" style="left:32px;top:397px;letter-spacing:-0.013px">90° Bögen</div>
<div class="t" style="left:212px;top:397px;letter-spacing:0.695px">(1/3)</div>
<div class="t num" style="right:324px;top:397px">0,01</div>
<div class="t num" style="right:244px;top:397px">0,05</div>
<div class="t" style="left:32px;top:414px;letter-spacing:0.305px">Hähne</div>
<div class="t" style="left:212px;top:414px;letter-spacing:0.695px">(0/0)</div>
<div class="t num" style="right:324px;top:414px">0,00</div>
<div class="t num" style="right:244px;top:414px">0,00</div>
<div class="t" style="left:32px;top:431px;letter-spacing:0.567px">Ventile</div>
<div class="t" style="left:212px;top:431px;letter-spacing:0.695px">(1/1)</div>
<div class="t num" style="right:324px;top:431px">0,04</div>
<div class="t num" style="right:244px;top:431px">0,12</div>
<div class="t" style="left:32px;top:448px;letter-spacing:0.168px">Schieber</div>
<div class="t" style="left:212px;top:448px;letter-spacing:0.695px">(0/0)</div>
<div class="t num" style="right:324px;top:448px">0,00</div>
<div class="t num" style="right:244px;top:448px">0,00</div>
<div class="t" style="left:32px;top:465px;letter-spacing:0.386px">Rückschlagventile</div>
<div class="t" style="left:212px;top:465px;letter-spacing:0.695px">(0/0)</div>
<div class="t num" style="right:324px;top:465px">0,00</div>
<div class="t num" style="right:244px;top:465px">0,00</div>
<div class="t" style="left:32px;top:482px;letter-spacing:0.396px">Rückschlagklappen</div>
<div class="t" style="left:212px;top:482px;letter-spacing:0.695px">(0/0)</div>
<div class="t num" style="right:324px;top:482px">0,00</div>
<div class="t num" style="right:244px;top:482px">0,00</div>
<div class="t" style="left:32px;top:499px;letter-spacing:0.532px">Messgerät/--</div>
<div class="t" style="left:212px;top:499px;letter-spacing:0.695px">(1/0)</div>
<div class="t num" style="right:324px;top:499px">0,20</div>
<div class="t num" style="right:244px;top:499px">0,00</div>
<div class="t" style="left:32px;top:516px;letter-spacing:0.698px">Filter/--</div>
<div class="t" style="left:212px;top:516px;letter-spacing:0.695px">(1/0)</div>
<div class="t num" style="right:324px;top:516px">0,10</div>
<div class="t num" style="right:244px;top:516px">0,00</div>
<div class="t" style="left:32px;top:533px;letter-spacing:0.788px">--/--</div>
<div class="t" style="left:212px;top:533px;letter-spacing:0.695px">(0/0)</div>
<div class="t num" style="right:324px;top:533px">0,00</div>
<div class="t num" style="right:244px;top:533px">0,00</div>
<div class="t" style="left:32px;top:567px;letter-spacing:0.267px">Druck am Pumpenstutzen (abs.)</div>
<div class="t" style="left:212px;top:567px;letter-spacing:1.084px">bar</div>
<div class="t num" style="right:324px;top:567px">0,93</div>
<div class="t num" style="right:244px;top:567px">5,02</div>
<div class="t" style="left:32px;top:601px;letter-spacing:0.479px">Differenzdruck</div>
<div class="t" style="left:212px;top:601px;letter-spacing:1.084px">bar</div>
<div class="t num" style="right:244px;top:601px">4,09</div>
<div class="tb" style="left:32px;top:618px;letter-spacing:0.081px">Förderhöhe</div>
<div class="t" style="left:212px;top:618px;letter-spacing:0.417px">m</div>
<div class="t num" style="right:244px;top:618px">22,68</div>
<div class="tb" style="left:32px;top:635px;letter-spacing:-0.303px">NPSH-Anlage</div>
<div class="t" style="left:212px;top:635px;letter-spacing:0.417px">m</div>
<div class="t num" style="right:244px;top:635px">5,20</div>
<div class="t" style="left:32px;top:652px;letter-spacing:0.358px">Leistung bei Wirk.grad 100%</div>
<div class="t" style="left:212px;top:652px;letter-spacing:0.129px">kW</div>
<div class="t num" style="right:244px;top:652px">3,41</div>
<div style="left:30px;top:22px;width:179px;height:1px;background:#000;"></div>
<div style="left:31px;top:23px;width:177px;height:1px;background:#fff;"></div>
<div style="left:30px;top:22px;width:1px;height:18px;background:#000;"></div>
<div style="left:31px;top:23px;width:1px;height:14px;background:#fff;"></div>
<div style="left:208px;top:22px;width:1px;height:16px;background:#000;"></div>
<div style="left:209px;top:22px;width:1px;height:16px;background:#fff;"></div>
<div style="left:210px;top:22px;width:1px;height:17px;background:#000;"></div>
<div style="left:30px;top:37px;width:179px;height:1px;background:#000;"></div>
<div style="left:31px;top:38px;width:177px;height:1px;background:#fff;"></div>
<div style="left:30px;top:39px;width:181px;height:1px;background:#000;"></div>
<div style="left:207px;top:36px;width:5px;height:5px;background:#000;"></div>
<div style="left:209px;top:36px;width:1px;height:2px;background:#fff;"></div>
<div style="left:207px;top:38px;width:5px;height:1px;background:#fff;"></div>
<div style="left:209px;top:35px;width:1px;height:1px;background:#000;"></div>
<div style="left:206px;top:38px;width:1px;height:1px;background:#000;"></div>
<div style="left:0px;top:0px;width:681px;height:1px;background:#a5c1e8;"></div>
<div style="left:0px;top:1px;width:681px;height:1px;background:#c3d6ef;"></div>
<div style="left:0px;top:0px;width:4px;height:676px;background:#afc8e8;"></div>
<div style="left:3px;top:2px;width:1px;height:674px;background:#a9c3e6;"></div>
<div style="left:30px;top:2px;width:651px;height:19px;background:linear-gradient(#f5fafa 0px,#eef4f4 3px,#ebe9f3 6.5px,#e3e8ef 10px,#dde2e9 14px,#d4dae8 17px,#d0d7e6 19px);"></div>
<div style="left:30px;top:2px;width:179px;height:19px;background:linear-gradient(#f8d8a0 0px,#f6d18f 3px,#eccd8b 6px,#edc87c 10px,#eec46d 14px,#edbf5f 19px);"></div>
<div style="left:30px;top:21px;width:651px;height:1px;background:#9eb6ce;"></div>
<div style="left:30px;top:21px;width:180px;height:1px;background:#f5a040;"></div>
<div style="left:151px;top:2px;width:1px;height:19px;background:#f39a3a;"></div>
<div style="left:209px;top:2px;width:1px;height:19px;background:#f39a3a;"></div>
<div style="left:278px;top:2px;width:1px;height:19px;background:#9eb6ce;"></div>
<div style="left:358px;top:2px;width:1px;height:19px;background:#9eb6ce;"></div>
<div style="left:438px;top:2px;width:1px;height:19px;background:#9eb6ce;"></div>
<div style="left:518px;top:2px;width:1px;height:19px;background:#9eb6ce;"></div>
<div style="left:598px;top:2px;width:1px;height:19px;background:#9eb6ce;"></div>
<div style="left:678px;top:2px;width:1px;height:19px;background:#9eb6ce;"></div>
<div class="ch" style="left:30px;width:121px">A</div>
<div class="ch" style="left:152px;width:57px">B</div>
<div class="ch" style="left:210px;width:68px">C</div>
<div class="ch" style="left:279px;width:79px">D</div>
<div class="ch" style="left:359px;width:79px">E</div>
<div class="ch" style="left:439px;width:79px">F</div>
<div class="ch" style="left:519px;width:79px">G</div>
<div class="ch" style="left:599px;width:79px">H</div>
<div style="left:4px;top:2px;width:25px;height:19px;background:#abc4e7;"></div>
<div style="left:5px;top:3px;width:23px;height:1px;background:#d3e0f2;"></div>
<div style="left:5px;top:3px;width:1px;height:17px;background:#d3e0f2;"></div>
<div style="left:4px;top:2px;width:25px;height:1px;background:#9fb8dc;"></div>
<svg style="position:absolute;left:4px;top:2px" width="25" height="19"><defs><linearGradient id="cg" x1="0" y1="0" x2="0" y2="1"><stop offset="0" stop-color="#f4f6f9"/><stop offset="1" stop-color="#d8dde4"/></linearGradient></defs><polygon points="10.5,15.5 21,15.5 21,5" fill="url(#cg)"/></svg>
<div style="left:29px;top:2px;width:1px;height:20px;background:#f39a3a;"></div>
<div style="left:4px;top:21px;width:25px;height:1px;background:#f39a3a;"></div>
<div style="left:4px;top:22px;width:25px;height:654px;background:#e4eaf4;"></div>
<div style="left:29px;top:22px;width:1px;height:654px;background:#9db4cc;"></div>
<div style="left:4px;top:22px;width:25px;height:16px;background:#f8d38a;"></div>
<div style="left:29px;top:22px;width:1px;height:17px;background:#f39a3a;"></div>
<div style="left:4px;top:38px;width:25px;height:1px;background:#f39a3a;"></div>
<div class="rh" style="top:22px">1</div>
<div style="left:4px;top:39px;width:25px;height:1px;background:#eef2f8;"></div>
<div style="left:4px;top:55px;width:25px;height:1px;background:#9fb5cf;"></div>
<div class="rh" style="top:39px">2</div>
<div style="left:4px;top:56px;width:25px;height:1px;background:#eef2f8;"></div>
<div style="left:4px;top:72px;width:25px;height:1px;background:#9fb5cf;"></div>
<div class="rh" style="top:56px">3</div>
<div style="left:4px;top:73px;width:25px;height:1px;background:#eef2f8;"></div>
<div style="left:4px;top:89px;width:25px;height:1px;background:#9fb5cf;"></div>
<div class="rh" style="top:73px">4</div>
<div style="left:4px;top:90px;width:25px;height:1px;background:#eef2f8;"></div>
<div style="left:4px;top:106px;width:25px;height:1px;background:#9fb5cf;"></div>
<div class="rh" style="top:90px">5</div>
<div style="left:4px;top:107px;width:25px;height:1px;background:#eef2f8;"></div>
<div style="left:4px;top:123px;width:25px;height:1px;background:#9fb5cf;"></div>
<div class="rh" style="top:107px">6</div>
<div style="left:4px;top:124px;width:25px;height:1px;background:#eef2f8;"></div>
<div style="left:4px;top:140px;width:25px;height:1px;background:#9fb5cf;"></div>
<div class="rh" style="top:124px">7</div>
<div style="left:4px;top:141px;width:25px;height:1px;background:#eef2f8;"></div>
<div style="left:4px;top:157px;width:25px;height:1px;background:#9fb5cf;"></div>
<div class="rh" style="top:141px">8</div>
<div style="left:4px;top:158px;width:25px;height:1px;background:#eef2f8;"></div>
<div style="left:4px;top:174px;width:25px;height:1px;background:#9fb5cf;"></div>
<div class="rh" style="top:158px">9</div>
<div style="left:4px;top:175px;width:25px;height:1px;background:#eef2f8;"></div>
<div style="left:4px;top:191px;width:25px;height:1px;background:#9fb5cf;"></div>
<div class="rh" style="top:175px">10</div>
<div style="left:4px;top:192px;width:25px;height:1px;background:#eef2f8;"></div>
<div style="left:4px;top:208px;width:25px;height:1px;background:#9fb5cf;"></div>
<div class="rh" style="top:192px">11</div>
<div style="left:4px;top:209px;width:25px;height:1px;background:#eef2f8;"></div>
<div style="left:4px;top:225px;width:25px;height:1px;background:#9fb5cf;"></div>
<div class="rh" style="top:209px">12</div>
<div style="left:4px;top:226px;width:25px;height:1px;background:#eef2f8;"></div>
<div style="left:4px;top:242px;width:25px;height:1px;background:#9fb5cf;"></div>
<div class="rh" style="top:226px">13</div>
<div style="left:4px;top:243px;width:25px;height:1px;background:#eef2f8;"></div>
<div style="left:4px;top:259px;width:25px;height:1px;background:#9fb5cf;"></div>
<div class="rh" style="top:243px">14</div>
<div style="left:4px;top:260px;width:25px;height:1px;background:#eef2f8;"></div>
<div style="left:4px;top:276px;width:25px;height:1px;background:#9fb5cf;"></div>
<div class="rh" style="top:260px">15</div>
<div style="left:4px;top:277px;width:25px;height:1px;background:#eef2f8;"></div>
<div style="left:4px;top:293px;width:25px;height:1px;background:#9fb5cf;"></div>
<div class="rh" style="top:277px">16</div>
<div style="left:4px;top:294px;width:25px;height:1px;background:#eef2f8;"></div>
<div style="left:4px;top:310px;width:25px;height:1px;background:#9fb5cf;"></div>
<div class="rh" style="top:294px">17</div>
<div style="left:4px;top:311px;width:25px;height:1px;background:#eef2f8;"></div>
<div style="left:4px;top:327px;width:25px;height:1px;background:#9fb5cf;"></div>
<div class="rh" style="top:311px">18</div>
<div style="left:4px;top:328px;width:25px;height:1px;background:#eef2f8;"></div>
<div style="left:4px;top:344px;width:25px;height:1px;background:#9fb5cf;"></div>
<div class="rh" style="top:328px">19</div>
<div style="left:4px;top:345px;width:25px;height:1px;background:#eef2f8;"></div>
<div style="left:4px;top:361px;width:25px;height:1px;background:#9fb5cf;"></div>
<div class="rh" style="top:345px">20</div>
<div style="left:4px;top:362px;width:25px;height:1px;background:#eef2f8;"></div>
<div style="left:4px;top:378px;width:25px;height:1px;background:#9fb5cf;"></div>
<div class="rh" style="top:362px">21</div>
<div style="left:4px;top:379px;width:25px;height:1px;background:#eef2f8;"></div>
<div style="left:4px;top:395px;width:25px;height:1px;background:#9fb5cf;"></div>
<div class="rh" style="top:379px">22</div>
<div style="left:4px;top:396px;width:25px;height:1px;background:#eef2f8;"></div>
<div style="left:4px;top:412px;width:25px;height:1px;background:#9fb5cf;"></div>
<div class="rh" style="top:396px">23</div>
<div style="left:4px;top:413px;width:25px;height:1px;background:#eef2f8;"></div>
<div style="left:4px;top:429px;width:25px;height:1px;background:#9fb5cf;"></div>
<div class="rh" style="top:413px">24</div>
<div style="left:4px;top:430px;width:25px;height:1px;background:#eef2f8;"></div>
<div style="left:4px;top:446px;width:25px;height:1px;background:#9fb5cf;"></div>
<div class="rh" style="top:430px">25</div>
<div style="left:4px;top:447px;width:25px;height:1px;background:#eef2f8;"></div>
<div style="left:4px;top:463px;width:25px;height:1px;background:#9fb5cf;"></div>
<div class="rh" style="top:447px">26</div>
<div style="left:4px;top:464px;width:25px;height:1px;background:#eef2f8;"></div>
<div style="left:4px;top:480px;width:25px;height:1px;background:#9fb5cf;"></div>
<div class="rh" style="top:464px">27</div>
<div style="left:4px;top:481px;width:25px;height:1px;background:#eef2f8;"></div>
<div style="left:4px;top:497px;width:25px;height:1px;background:#9fb5cf;"></div>
<div class="rh" style="top:481px">28</div>
<div style="left:4px;top:498px;width:25px;height:1px;background:#eef2f8;"></div>
<div style="left:4px;top:514px;width:25px;height:1px;background:#9fb5cf;"></div>
<div class="rh" style="top:498px">29</div>
<div style="left:4px;top:515px;width:25px;height:1px;background:#eef2f8;"></div>
<div style="left:4px;top:531px;width:25px;height:1px;background:#9fb5cf;"></div>
<div class="rh" style="top:515px">30</div>
<div style="left:4px;top:532px;width:25px;height:1px;background:#eef2f8;"></div>
<div style="left:4px;top:548px;width:25px;height:1px;background:#9fb5cf;"></div>
<div class="rh" style="top:532px">31</div>
<div style="left:4px;top:549px;width:25px;height:1px;background:#eef2f8;"></div>
<div style="left:4px;top:565px;width:25px;height:1px;background:#9fb5cf;"></div>
<div class="rh" style="top:549px">32</div>
<div style="left:4px;top:566px;width:25px;height:1px;background:#eef2f8;"></div>
<div style="left:4px;top:582px;width:25px;height:1px;background:#9fb5cf;"></div>
<div class="rh" style="top:566px">33</div>
<div style="left:4px;top:583px;width:25px;height:1px;background:#eef2f8;"></div>
<div style="left:4px;top:599px;width:25px;height:1px;background:#9fb5cf;"></div>
<div class="rh" style="top:583px">34</div>
<div style="left:4px;top:600px;width:25px;height:1px;background:#eef2f8;"></div>
<div style="left:4px;top:616px;width:25px;height:1px;background:#9fb5cf;"></div>
<div class="rh" style="top:600px">35</div>
<div style="left:4px;top:617px;width:25px;height:1px;background:#eef2f8;"></div>
<div style="left:4px;top:633px;width:25px;height:1px;background:#9fb5cf;"></div>
<div class="rh" style="top:617px">36</div>
<div style="left:4px;top:634px;width:25px;height:1px;background:#eef2f8;"></div>
<div style="left:4px;top:650px;width:25px;height:1px;background:#9fb5cf;"></div>
<div class="rh" style="top:634px">37</div>
<div style="left:4px;top:651px;width:25px;height:1px;background:#eef2f8;"></div>
<div style="left:4px;top:667px;width:25px;height:1px;background:#9fb5cf;"></div>
<div class="rh" style="top:651px">38</div>
<div style="left:4px;top:668px;width:25px;height:1px;background:#eef2f8;"></div>
<div style="left:4px;top:684px;width:25px;height:1px;background:#9fb5cf;"></div>
<div class="rh" style="top:668px">39</div>
<svg style="position:absolute;left:0;top:0" width="681" height="676" viewBox="0 0 681 676">
<defs>
<filter id="al" x="-5%" y="-5%" width="110%" height="110%"><feComponentTransfer><feFuncA type="discrete" tableValues="0 0 0 0 1 1 1 1 1 1"/></feComponentTransfer></filter>
<clipPath id="tl"><path d="M465.5,149.5 A17.5,5.2 0 0 1 500.5,149.5 L500.5,196.5 A17.5,5.2 0 0 1 465.5,196.5 Z"/></clipPath>
<clipPath id="tr"><path d="M608.5,72.5 A17.5,5.2 0 0 1 643.5,72.5 L643.5,119.5 A17.5,5.2 0 0 1 608.5,119.5 Z"/></clipPath>
</defs>
<rect x="450" y="28" width="228" height="250" fill="#f8f8f8"/>
<!-- left tank -->
<path d="M465.5,149.5 A17.5,5.2 0 0 1 500.5,149.5 L500.5,196.5 A17.5,5.2 0 0 1 465.5,196.5 Z" fill="#f8f8f8"/>
<rect x="460" y="183" width="46" height="25" fill="#0000ff" clip-path="url(#tl)"/>
<path d="M465.5,149.5 A17.5,5.2 0 0 1 500.5,149.5 L500.5,196.5 A17.5,5.2 0 0 1 465.5,196.5 Z" fill="none" stroke="#000" stroke-width="1.3"/>
<polygon points="476,174.5 489,174.5 482.5,182.5" fill="#f8f8f8" stroke="#000" stroke-width="1.2"/>
<!-- right tank -->
<path d="M608.5,72.5 A17.5,5.2 0 0 1 643.5,72.5 L643.5,119.5 A17.5,5.2 0 0 1 608.5,119.5 Z" fill="#f8f8f8"/>
<rect x="603" y="88" width="46" height="42" fill="#0000ff" clip-path="url(#tr)"/>
<path d="M608.5,72.5 A17.5,5.2 0 0 1 643.5,72.5 L643.5,119.5 A17.5,5.2 0 0 1 608.5,119.5 Z" fill="none" stroke="#000" stroke-width="1.3"/>
<polygon points="619,79.5 632,79.5 625.5,87.5" fill="#f8f8f8" stroke="#000" stroke-width="1.2"/>
<!-- pipes -->
<rect x="481" y="202" width="3" height="39" fill="#000"/>
<rect x="624" y="124" width="3" height="117" fill="#000"/>
<rect x="481" y="238" width="146" height="3" fill="#000"/>
<rect x="482" y="202" width="1" height="38" fill="#0000ff"/>
<rect x="625" y="124" width="1" height="116" fill="#0000ff"/>
<rect x="482" y="239" width="144" height="1" fill="#0000ff"/>
<!-- pump -->
<clipPath id="pc"><circle cx="561" cy="239.7" r="10.6"/></clipPath>
<circle cx="561" cy="239.7" r="11.2" fill="#f8f8f8"/>
<g clip-path="url(#pc)">
<polyline points="561,228.5 570.3,237.8 562.5,251" fill="none" stroke="#fff" stroke-width="3.4"/>
<polyline points="561,228.5 570.3,237.8 562.5,251" fill="none" stroke="#000" stroke-width="1.3"/>
</g>
<rect x="550" y="239" width="22" height="1" fill="#0000ff"/>
<circle cx="561" cy="239.7" r="11.2" fill="none" stroke="#000" stroke-width="1.5"/>
<!-- reference lines -->
<rect x="502" y="183" width="15" height="1" fill="#000"/>
<rect x="645" y="88" width="19" height="1" fill="#000"/>
<rect x="631" y="239" width="39" height="1" fill="#000"/>
<!-- arrows -->
<rect x="516" y="189" width="1" height="46" fill="#ff0000"/>
<polygon points="516.5,183 510.5,189.5 522.5,189.5" fill="#ff0000"/>
<polygon points="516.5,240 510.5,234 522.5,234" fill="#ff0000"/>
<rect x="663" y="94" width="1" height="141" fill="#ff0000"/>
<polygon points="663.5,88 657.5,94.5 669.5,94.5" fill="#ff0000"/>
<polygon points="663.5,240 657.5,234 669.5,234" fill="#ff0000"/>
<!-- texts -->
<g font-family="Liberation Sans" font-size="14.5" fill="#000">
<text transform="translate(456,123) scale(0.9,1)" x="0" y="0">Behälter</text>
<text transform="translate(456,138) scale(0.9,1)" x="0" y="0">Saugseite</text>
<text transform="translate(596,46) scale(0.9,1)" x="0" y="0">Behälter</text>
<text transform="translate(596,62) scale(0.9,1)" x="0" y="0">Druckseite</text>
<text transform="translate(541,267) scale(0.9,1)" x="0" y="0">Pumpe</text>
<text transform="translate(523,214) scale(0.9,1)" x="0" y="0" fill="#ff0000">Hs</text>
<text transform="translate(635,169) scale(0.9,1)" x="0" y="0" fill="#ff0000">Hp</text>
</g>
</svg>

</body></html>
